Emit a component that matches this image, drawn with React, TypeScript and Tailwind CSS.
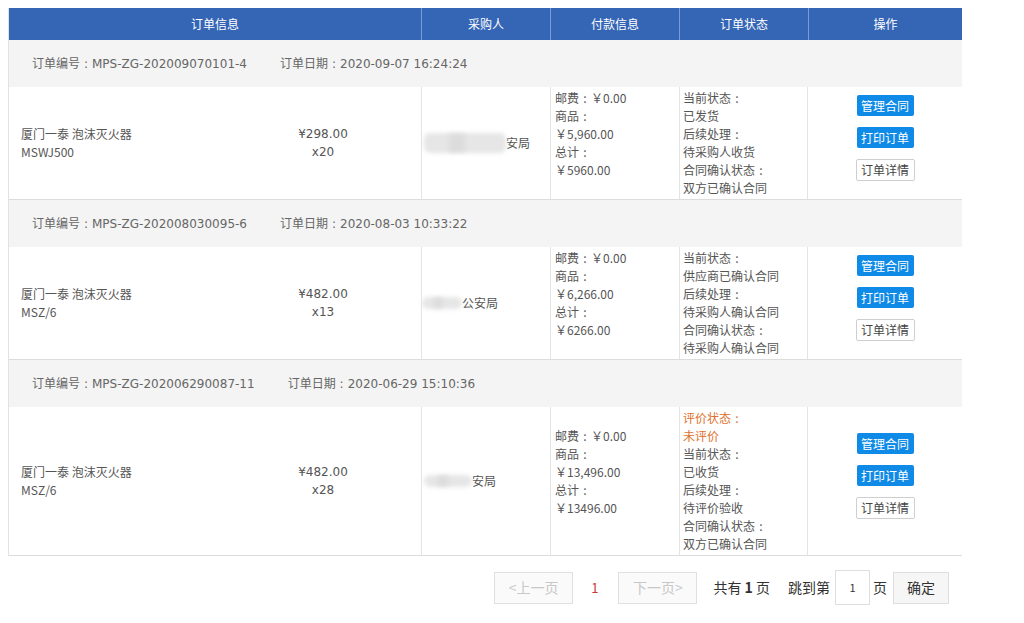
import React from "react";

type Order = {
  no: string;
  date: string;
  name: string;
  model: string;
  price: string;
  qty: string;
  blurW: number;
  blurH: number;
  buyerText: string;
  buyerPad: number;
  goods: string;
  total: string;
  status: { t: string; orange?: boolean }[];
};

const orders: Order[] = [
  {
    no: "MPS-ZG-202009070101-4",
    date: "2020-09-07 16:24:24",
    name: "厦门一泰 泡沫灭火器",
    model: "MSWJ500",
    price: "¥298.00",
    qty: "x20",
    blurW: 82,
    blurH: 20,
    buyerText: "安局",
    buyerPad: 2,
    goods: "5,960.00",
    total: "5960.00",
    status: [
      { t: "当前状态：" },
      { t: "已发货" },
      { t: "后续处理：" },
      { t: "待采购人收货" },
      { t: "合同确认状态：" },
      { t: "双方已确认合同" },
    ],
  },
  {
    no: "MPS-ZG-202008030095-6",
    date: "2020-08-03 10:33:22",
    name: "厦门一泰 泡沫灭火器",
    model: "MSZ/6",
    price: "¥482.00",
    qty: "x13",
    blurW: 40,
    blurH: 12,
    buyerText: "公安局",
    buyerPad: 0,
    goods: "6,266.00",
    total: "6266.00",
    status: [
      { t: "当前状态：" },
      { t: "供应商已确认合同" },
      { t: "后续处理：" },
      { t: "待采购人确认合同" },
      { t: "合同确认状态：" },
      { t: "待采购人确认合同" },
    ],
  },
  {
    no: "MPS-ZG-202006290087-11",
    date: "2020-06-29 15:10:36",
    name: "厦门一泰 泡沫灭火器",
    model: "MSZ/6",
    price: "¥482.00",
    qty: "x28",
    blurW: 48,
    blurH: 12,
    buyerText: "安局",
    buyerPad: 2,
    goods: "13,496.00",
    total: "13496.00",
    status: [
      { t: "评价状态：", orange: true },
      { t: "未评价", orange: true },
      { t: "当前状态：" },
      { t: "已收货" },
      { t: "后续处理：" },
      { t: "待评价验收" },
      { t: "合同确认状态：" },
      { t: "双方已确认合同" },
    ],
  },
];

const cjk = "font-['Noto_Sans_CJK_SC','Noto_Sans',sans-serif]";
const dv = "font-['DejaVu_Sans','Noto_Sans_CJK_SC',sans-serif]";

function Colon() {
  return <span className="inline-block w-[12px] text-center">:</span>;
}

function Label({ text }: { text: string }) {
  if (text.endsWith("：")) {
    return (
      <>
        {text.slice(0, -1)}
        <Colon />
      </>
    );
  }
  return <>{text}</>;
}

function OrderGroup({ o }: { o: Order }) {
  return (
    <div className="border-b border-[#dcdcdc]">
      <div className={`h-[47px] bg-[#f4f4f4] flex items-center pl-[23px] gap-[33px] text-[12px] text-[#666] ${dv}`}>
        <span>
          <span className={cjk}>订单编号</span>
          <Colon />
          {o.no}
        </span>
        <span>
          <span className={cjk}>订单日期</span>
          <Colon />
          {o.date}
        </span>
      </div>
      <div className="grid grid-cols-[216px_196px_129px_129px_129px_154px] bg-white text-[12px] leading-[18px] text-[#555]">
        <div className={`flex flex-col justify-center pl-[12px] ${cjk}`}>
          <span>{o.name}</span>
          <span>{o.model}</span>
        </div>
        <div className={`flex flex-col justify-center items-center ${dv}`}>
          <span>{o.price}</span>
          <span>{o.qty}</span>
        </div>
        <div className={`border-l border-[#e4e4e4] flex items-center ${cjk}`} style={{ paddingLeft: o.buyerPad }}>
          <span className="relative flex shrink-0 items-center" style={{ width: o.blurW, height: o.blurH }}>
            <span className="absolute inset-0 rounded-[6px] bg-[#e6e6e6] blur-[2px]"></span>
            <span className="absolute left-[30%] top-[1px] bottom-[1px] w-[20%] bg-[#dcdcdc] blur-[2px]"></span>
          </span>
          <span>{o.buyerText}</span>
        </div>
        <div className={`border-l border-[#e4e4e4] flex flex-col justify-center pl-[4px] ${cjk}`}>
          <span>
            邮费
            <Colon />￥0.00
          </span>
          <span>
            商品
            <Colon />
          </span>
          <span>￥{o.goods}</span>
          <span>
            总计
            <Colon />
          </span>
          <span>￥{o.total}</span>
          <span>&nbsp;</span>
        </div>
        <div className={`border-l border-r border-[#e4e4e4] flex flex-col justify-center pl-[3px] py-[2px] ${cjk}`}>
          {o.status.map((s, i) => (
            <span key={i} className={s.orange ? "text-[#e0702e]" : ""}>
              <Label text={s.t} />
            </span>
          ))}
        </div>
        <div className={`flex flex-col items-center justify-center gap-[11px] pb-[10px] ${cjk}`}>
          <button className="w-[57px] h-[21px] rounded-[2px] bg-[#0f8ae6] text-white text-[12px] leading-[21px]">
            管理合同
          </button>
          <button className="w-[57px] h-[21px] rounded-[2px] bg-[#0f8ae6] text-white text-[12px] leading-[21px]">
            打印订单
          </button>
          <button className="w-[59px] h-[22px] rounded-[2px] bg-white border border-[#cfcfcf] text-[#444] text-[12px] leading-[20px]">
            订单详情
          </button>
        </div>
      </div>
    </div>
  );
}

export default function App() {
  return (
    <div className={`w-[1024px] h-[623px] bg-white pt-[8px] ${cjk}`}>
      <div className="ml-[8px] w-[954px] border-l border-[#e2e2e2]">
        <div className="grid grid-cols-[412px_129px_129px_129px_154px] h-[32px] bg-[#3565b5] text-white text-[12px]">
          <div className="flex items-center justify-center">订单信息</div>
          <div className="flex items-center justify-center border-l border-[#7a9bd3]">采购人</div>
          <div className="flex items-center justify-center border-l border-[#7a9bd3]">付款信息</div>
          <div className="flex items-center justify-center border-l border-[#7a9bd3]">订单状态</div>
          <div className="flex items-center justify-center border-l border-[#7a9bd3]">操作</div>
        </div>
        {orders.map((o) => (
          <OrderGroup key={o.no} o={o} />
        ))}
      </div>
      <div className="ml-[8px] w-[954px] mt-[14px] flex items-center justify-end pr-[13px] text-[14px] text-[#333]">
        <div className="w-[79px] h-[32px] border border-[#e0e0e0] bg-[#fafafa] text-[#c8c8c8] flex items-center justify-center">
          &lt;上一页
        </div>
        <span className="ml-[18px] text-[#c83a3a] text-[13px]">1</span>
        <div className="ml-[20px] w-[79px] h-[32px] border border-[#e0e0e0] bg-[#fafafa] text-[#c8c8c8] flex items-center justify-center">
          下一页&gt;
        </div>
        <span className="ml-[16px]">
          共有 <b className="font-bold">1</b> 页
        </span>
        <span className="ml-[18px]">跳到第</span>
        <div className="ml-[5px] w-[35px] h-[35px] border border-[#dedede] bg-white flex items-center justify-center text-[11px]">
          1
        </div>
        <span className="ml-[3px]">页</span>
        <div className="ml-[6px] w-[56px] h-[32px] border border-[#dedede] bg-[#f6f6f6] flex items-center justify-center">
          确定
        </div>
      </div>
    </div>
  );
}
